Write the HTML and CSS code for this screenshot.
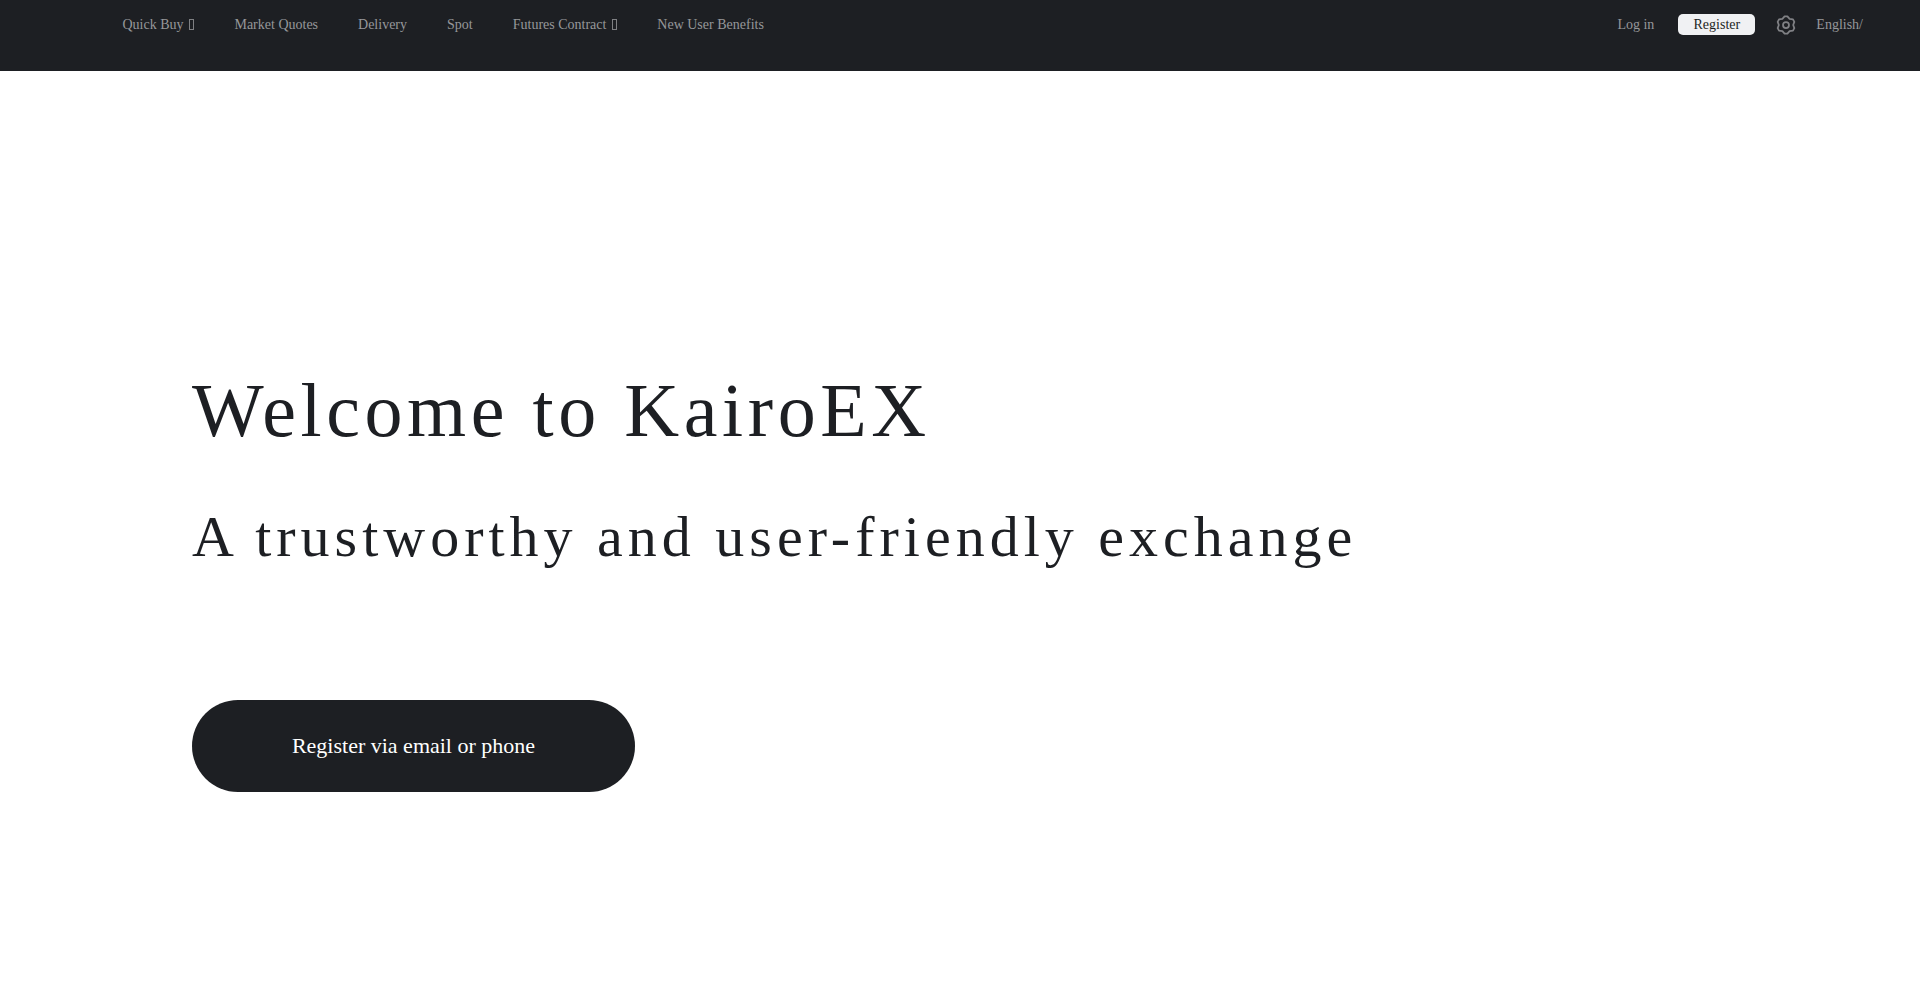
FILE: index.html
```html
<!DOCTYPE html>
<html lang="en">
<head>
  <meta charset="UTF-8">
  <meta name="viewport" content="width=device-width, initial-scale=1.0">
  <title>KairoEX</title>
  <link rel="stylesheet" href="styles.css">
</head>
<body>
  <header class="topbar">
    <nav class="nav-left">
      <a href="#">Quick Buy <span class="icon-missing"></span></a>
      <a href="#">Market Quotes</a>
      <a href="#">Delivery</a>
      <a href="#">Spot</a>
      <a href="#">Futures Contract <span class="icon-missing"></span></a>
      <a href="#">New User Benefits</a>
    </nav>
    <div class="nav-right">
      <a href="#" class="login">Log in</a>
      <a href="#" class="register">Register</a>
      <svg class="gear" viewBox="0 0 24 24" width="20" height="20" fill="none" stroke="currentColor" stroke-width="2.1" stroke-linejoin="round">
        <path d="M10.3 1.6 H13.7 L16.3 4.6 L20.4 5.3 L22 8.2 L20.6 12 L22 15.8 L20.4 18.7 L16.3 19.4 L13.7 22.4 H10.3 L7.7 19.4 L3.6 18.7 L2 15.8 L3.4 12 L2 8.2 L3.6 5.3 L7.7 4.6 Z"/>
        <circle cx="12" cy="12" r="3.6"/>
      </svg>
      <a href="#" class="lang">English/</a>
    </div>
  </header>

  <main class="hero">
    <h1>Welcome to KairoEX</h1>
    <h2>A trustworthy and user-friendly exchange</h2>
    <a href="#" class="cta">Register via email or phone</a>
  </main>
</body>
</html>
```

FILE: styles.css
```css
* {
  box-sizing: border-box;
}

body {
  margin: 0;
  font-family: "Liberation Serif", "Times New Roman", serif;
  background-color: #fff;
}

a {
  text-decoration: none;
  color: inherit;
}

.topbar {
  height: 71px;
  background-color: #1d1f23;
  color: #96979a;
  font-size: 14px;
  display: flex;
  justify-content: space-between;
  padding: 14px 57px 0 122.5px;
}

.nav-left {
  display: flex;
  gap: 40px;
  height: 21px;
  align-items: center;
}

.icon-missing {
  display: inline-block;
  width: 5px;
  height: 11px;
  margin-left: 2px;
  margin-right: 0.4px;
  vertical-align: -1px;
  border: 1px solid #7f8083;
}

.nav-right {
  display: flex;
  align-items: center;
  height: 21px;
}

.register {
  width: 77px;
  height: 21px;
  margin-left: 24px;
  line-height: 21px;
  text-align: center;
  color: #1d1f23;
  background-color: #f0f1f3;
  border-radius: 5px;
}

.gear {
  margin-left: 21px;
  color: #808185;
}

.lang {
  margin-left: 20px;
}

.hero {
  padding: 296px 0 0 192px;
  color: #1d1f23;
}

.hero h1 {
  margin: 0;
  font-size: 76px;
  font-weight: 400;
  line-height: 86px;
  letter-spacing: 0.06em;
}

.hero h2 {
  margin: 50px 0 0;
  font-size: 58px;
  font-weight: 400;
  line-height: 68px;
  letter-spacing: 5px;
}

.cta {
  display: block;
  width: 443px;
  height: 92px;
  margin-top: 129px;
  line-height: 92px;
  text-align: center;
  font-size: 22px;
  color: #fff;
  background-color: #1d1f23;
  border-radius: 46px;
}
```
